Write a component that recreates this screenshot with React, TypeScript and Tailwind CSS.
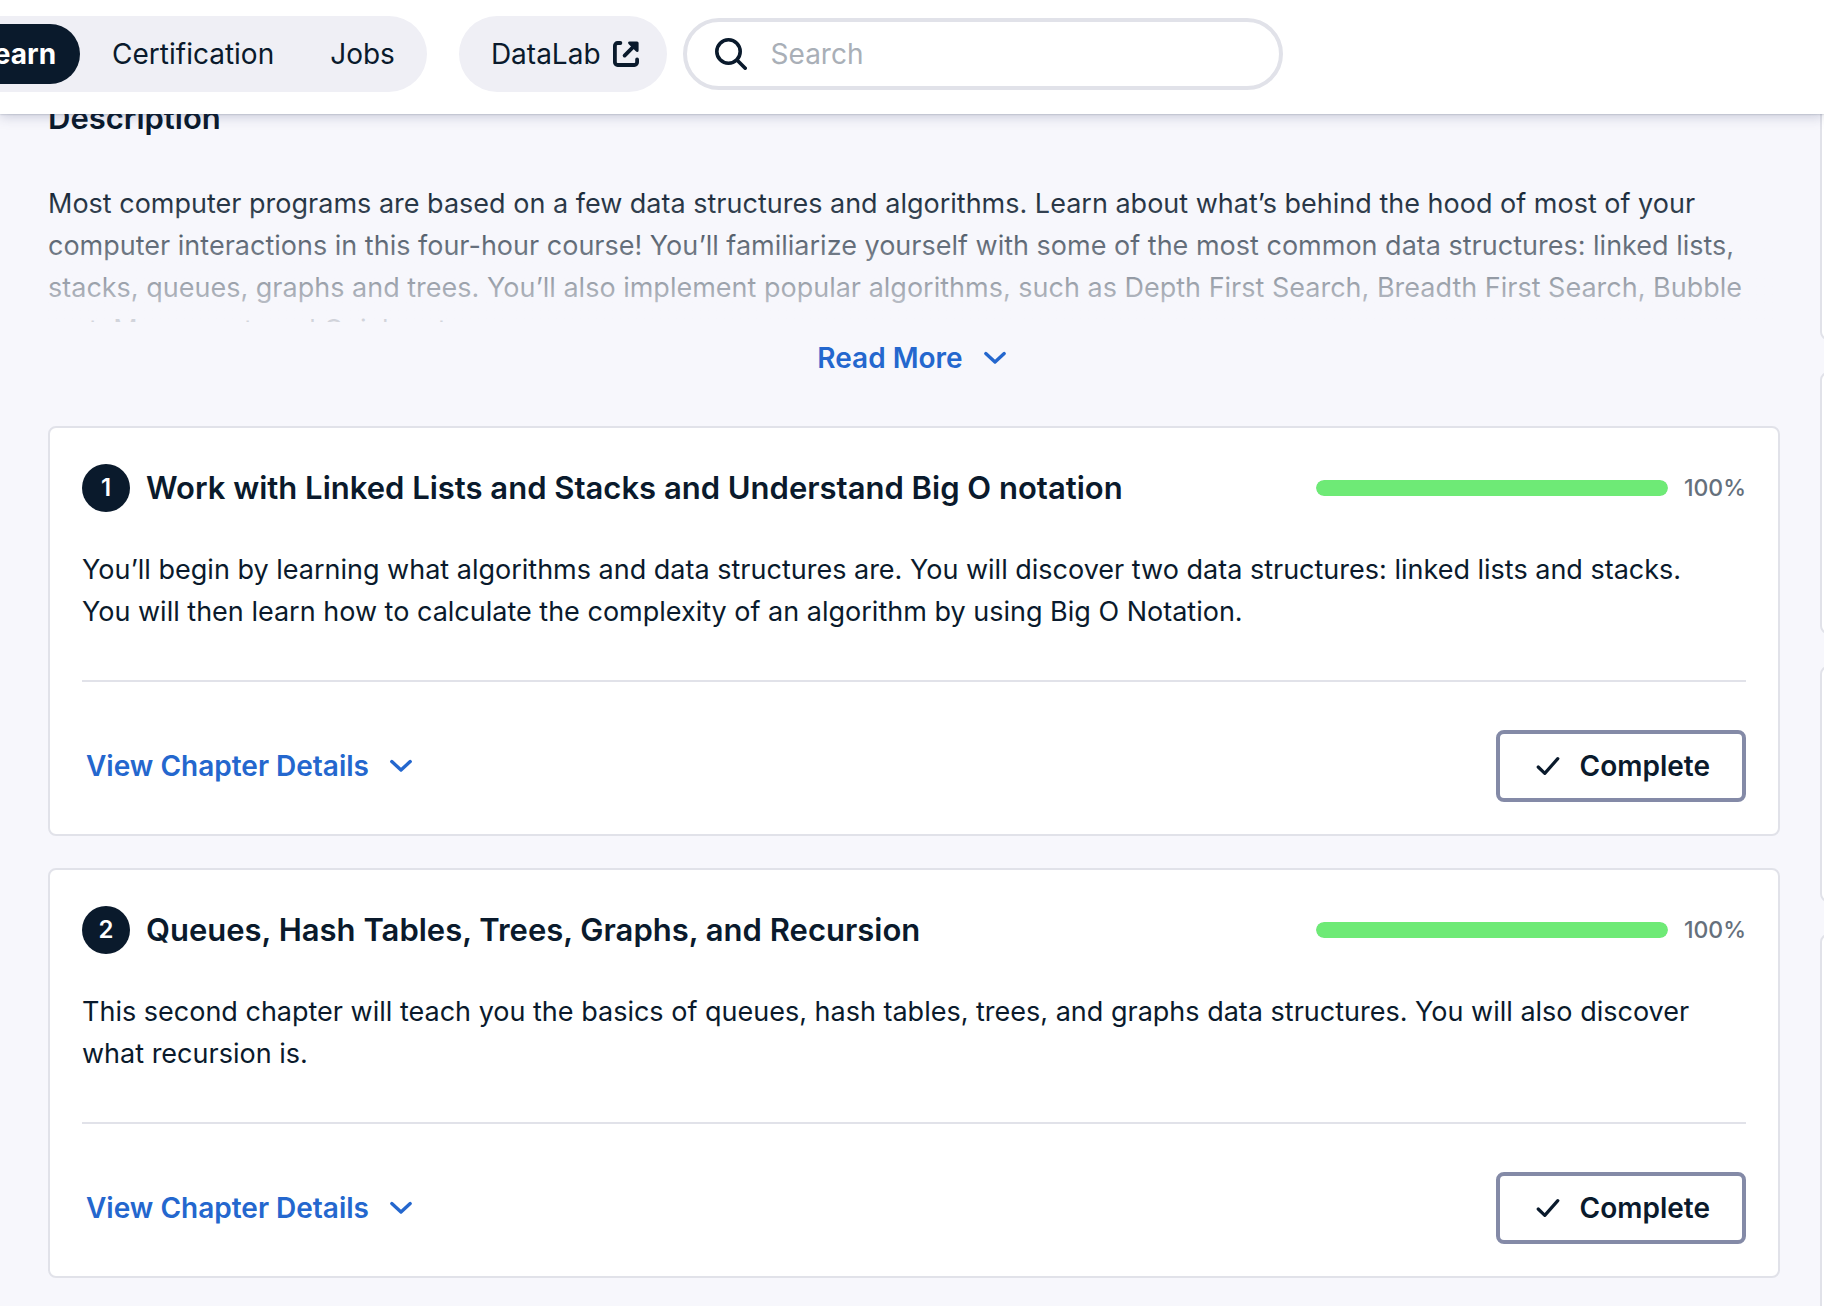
import React from "react";

const chapters = [
  {
    number: 1,
    title: "Work with Linked Lists and Stacks and Understand Big O notation",
    sentences: [
      "You’ll begin by learning what algorithms and data structures are. You will discover two data structures: linked lists and stacks.",
      "You will then learn how to calculate the complexity of an algorithm by using Big O Notation.",
    ],
    progress: 100,
  },
  {
    number: 2,
    title: "Queues, Hash Tables, Trees, Graphs, and Recursion",
    sentences: [
      "This second chapter will teach you the basics of queues, hash tables, trees, and graphs data structures. You will also discover what recursion is.",
    ],
    progress: 100,
  },
];

function ChevronDown() {
  return (
    <svg className="shrink-0" width="24" height="24" viewBox="0 0 24 24" fill="none" stroke="currentColor" strokeWidth="3.4" strokeLinecap="round" strokeLinejoin="round" aria-hidden="true">
      <path d="M2.8 7.6 12 16l9.2-8.4" />
    </svg>
  );
}

function CheckIcon() {
  return (
    <svg className="shrink-0" width="24" height="24" viewBox="0 0 24 24" fill="none" stroke="currentColor" strokeWidth="3.2" strokeLinecap="round" strokeLinejoin="round" aria-hidden="true">
      <path d="M2.2 13 8.8 19.4 21.8 4.6" />
    </svg>
  );
}

function ExternalIcon() {
  return (
    <svg className="shrink-0" width="26" height="26" viewBox="0 0 26 26" fill="none" stroke="currentColor" strokeWidth="3.8" strokeLinecap="round" strokeLinejoin="round" aria-hidden="true">
      <path d="M7.4 2H4.6A2.7 2.7 0 0 0 1.9 4.7V21.3a2.7 2.7 0 0 0 2.7 2.7H21.4a2.7 2.7 0 0 0 2.7-2.7V18.4" />
      <path d="M11.6 14.6 21 5.2" />
      <path d="M16.6 1.9H24.1V9.4Z" fill="currentColor" strokeWidth="3" />
    </svg>
  );
}

function SearchIcon() {
  return (
    <svg className="shrink-0" width="32" height="32" viewBox="0 0 32 32" fill="none" stroke="currentColor" strokeWidth="3.6" strokeLinecap="round" aria-hidden="true">
      <circle cx="13.5" cy="13.5" r="11.7" />
      <path d="M22 22 30.2 30.2" />
    </svg>
  );
}

function Header() {
  return (
    <header className="relative z-10 flex h-[114px] shrink-0 items-start bg-white pt-4 text-[28px] shadow-[0_0_2px_rgba(5,25,45,0.3),0_2px_12px_rgba(48,57,105,0.25)]">
      <nav className="-ml-[54px] flex h-[76px] items-center rounded-full bg-[#efeff5] pr-2">
        <a href="#learn" className="flex h-[60px] items-center rounded-full bg-[#0a1a2c] pl-8 pr-6 font-bold text-white">Learn</a>
        <a href="#certification" className="px-8">Certification</a>
        <a href="#jobs" className="px-6">Jobs</a>
      </nav>
      <a href="#datalab" className="ml-8 flex h-[76px] items-center gap-3 rounded-full bg-[#efeff5] pl-8 pr-7">
        DataLab
        <ExternalIcon />
      </a>
      <label className="ml-4 mt-0.5 flex h-[72px] w-[600px] items-center gap-6 rounded-full border-4 border-[#e1e2e9] pl-7 pr-6">
        <SearchIcon />
        <input type="search" aria-label="Search" placeholder="Search" className="w-full bg-transparent outline-none placeholder:text-[#a9afb7]" />
      </label>
    </header>
  );
}

function Chapter({ number, title, sentences, progress }: (typeof chapters)[number]) {
  return (
    <section className="rounded-lg border-2 border-[#e1e2e9] bg-white px-8 pb-8 pt-9">
      <div className="flex items-center gap-4">
        <span className="flex size-12 shrink-0 items-center justify-center rounded-full bg-[#0a1a2c] text-2xl font-semibold text-white">{number}</span>
        <h3 className="flex-1 text-[31px] font-semibold leading-10">{title}</h3>
        <div className="flex items-center gap-4">
          <div role="progressbar" aria-label={title} aria-valuenow={progress} className="h-4 w-[352px] overflow-hidden rounded-full bg-[#efeff5]">
            <div className="h-full rounded-full bg-[#6eea76]" style={{ width: `${progress}%` }} />
          </div>
          <span className="text-[23px] font-medium leading-8 text-[#65707c]">{progress}%</span>
        </div>
      </div>
      <div className="mb-[47px] mt-[37px] leading-[42px]">
        {sentences.map((sentence) => (
          <p key={sentence}>{sentence}</p>
        ))}
      </div>
      <div className="flex items-center justify-between border-t-2 border-[#e1e2e9] pt-12">
        <button type="button" className="flex items-center gap-5 pl-1 text-[28px] font-semibold text-[#2467ce]">
          View Chapter Details
          <ChevronDown />
        </button>
        <button type="button" className="flex h-[72px] items-center gap-5 rounded-lg border-4 border-[#848aa7] pl-9 pr-8 text-[28px] font-semibold">
          <CheckIcon />
          Complete
        </button>
      </div>
    </section>
  );
}

export default function App() {
  return (
    <div className="flex h-screen flex-col overflow-hidden bg-[#f7f7fc] font-['Inter',sans-serif] text-[27px] leading-10 text-[#0a1a2c]">
      <Header />
      <div className="-mt-4 flex min-h-0 flex-1">
        <main className="min-w-0 flex-1 pl-12 pr-10">
          <h2 className="text-[31px] font-semibold leading-10">Description</h2>
          <div className="relative mt-[45px] h-[139px] overflow-hidden">
            <p className="leading-[42px]">
              Most computer programs are based on a few data structures and algorithms. Learn about what’s behind the hood of most of your computer interactions in this four-hour course! You’ll familiarize yourself with some of the most common data structures: linked lists, stacks, queues, graphs and trees. You’ll also implement popular algorithms, such as Depth First Search, Breadth First Search, Bubble sort, Merge sort, and Quicksort.
            </p>
            <div className="absolute inset-0 bg-linear-to-b from-[#f7f7fc]/0 to-[#f7f7fc]/85" />
          </div>
          <div className="mb-12 mt-4 flex justify-center">
            <button type="button" className="flex items-center gap-5 pr-1 text-[28px] font-semibold text-[#2467ce]">
              Read More
              <ChevronDown />
            </button>
          </div>
          <div className="flex flex-col gap-8">
            {chapters.map((chapter) => (
              <Chapter key={chapter.number} {...chapter} />
            ))}
          </div>
        </main>
        <aside className="flex w-1 shrink-0 flex-col gap-8 overflow-hidden">
          <div className="h-[242px] w-40 shrink-0 rounded-lg border-2 border-[#e1e2e9] bg-white" />
          <div className="h-[262px] w-40 shrink-0 rounded-lg border-2 border-[#e1e2e9] bg-white" />
          <div className="h-[236px] w-40 shrink-0 rounded-lg border-2 border-[#e1e2e9] bg-white" />
          <div className="h-[600px] w-40 shrink-0 rounded-lg border-2 border-[#e1e2e9] bg-white" />
        </aside>
      </div>
    </div>
  );
}
